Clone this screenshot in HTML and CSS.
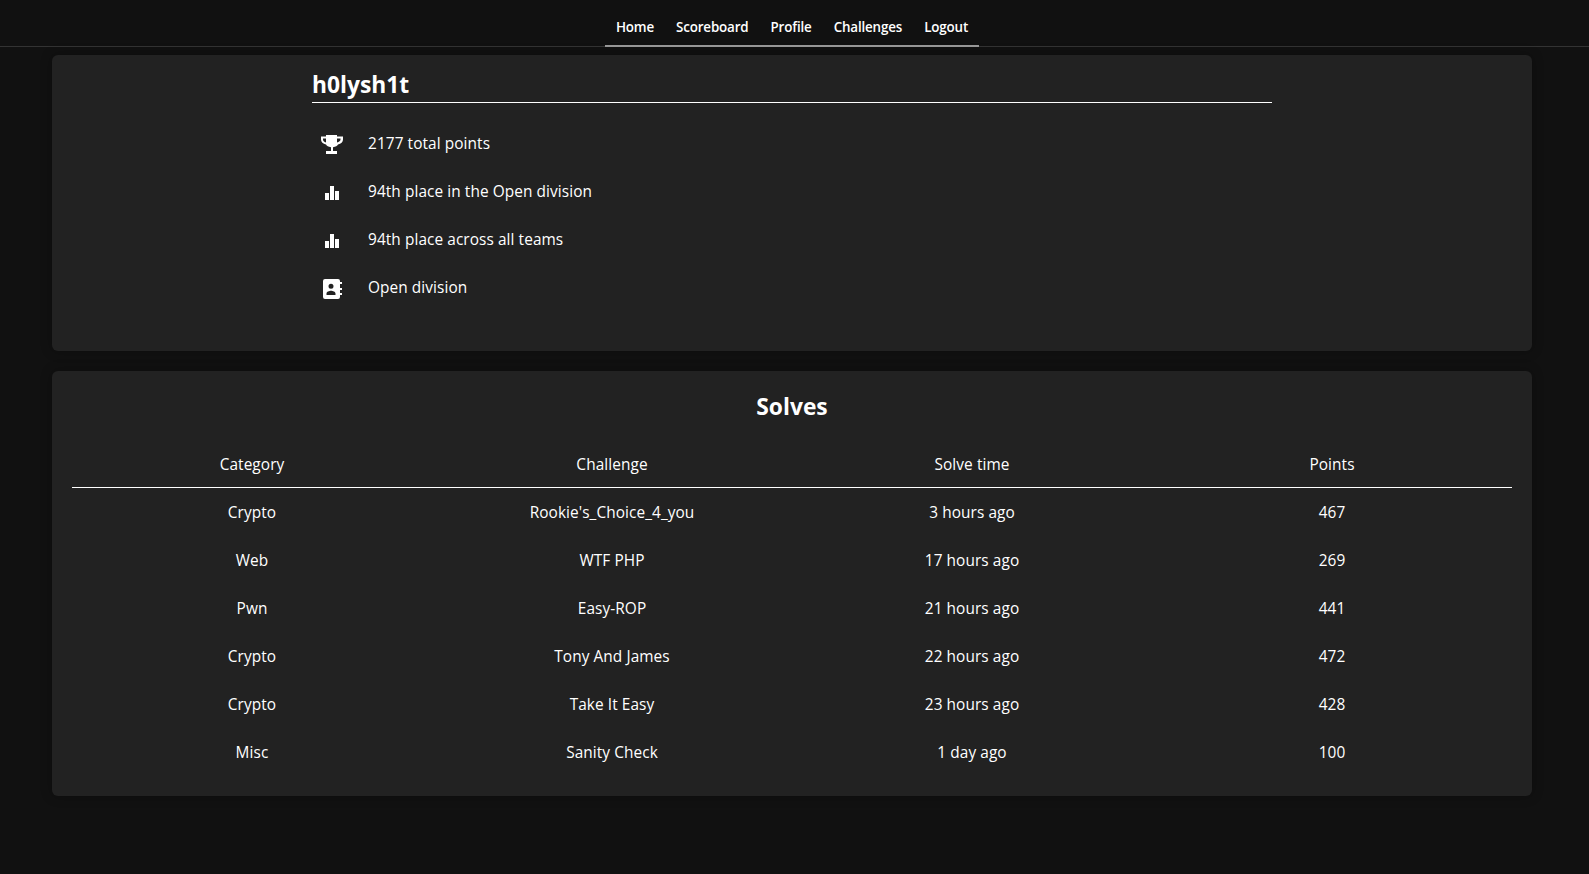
FILE: index.html
```html
<!DOCTYPE html>
<html lang="en">
<head>
<meta charset="utf-8">
<title>h0lysh1t</title>
<link rel="stylesheet" href="styles.css">
</head>
<body>
<header class="topbar">
  <nav class="tabs">
    <a class="tab" href="#">Home</a>
    <a class="tab" href="#">Scoreboard</a>
    <a class="tab" href="#">Profile</a>
    <a class="tab" href="#">Challenges</a>
    <a class="tab" href="#">Logout</a>
  </nav>
</header>
<main class="page">
  <section class="card profile">
    <div class="profile-inner">
      <h1 class="team">h0lysh1t</h1>
      <ul class="facts">
        <li class="fact">
          <svg class="icon" viewBox="0 0 24 24"><path fill="currentColor" fill-rule="evenodd" d="M6 4h11v1.500h6v3c0 2.600-2 4.500-5 5-.8 1.400-2.200 2.300-5 2.700V20h4v3H6v-3h5v-3.800c-2.800-.4-4.200-1.300-5-2.700-3-.5-5-2.400-5-5v-3h5zM3 7.500v1c0 1.400 1 2.500 3 3V7.500zM20.500 7.500H17v4c2-.5 3.500-1.600 3.500-3z"/></svg>
          <span>2177 total points</span>
        </li>
        <li class="fact">
          <svg class="icon" viewBox="0 0 24 24"><path fill="currentColor" d="M5 14h4v7H5zM10 7h4v14h-4zM15 12h4v9h-4z"/></svg>
          <span>94th place in the Open division</span>
        </li>
        <li class="fact">
          <svg class="icon" viewBox="0 0 24 24"><path fill="currentColor" d="M5 14h4v7H5zM10 7h4v14h-4zM15 12h4v9h-4z"/></svg>
          <span>94th place across all teams</span>
        </li>
        <li class="fact">
          <svg class="icon" viewBox="0 0 24 24"><path fill="currentColor" fill-rule="evenodd" d="M5 4a2 2 0 0 0-2 2v16a2 2 0 0 0 2 2h13a2 2 0 0 0 2-2v-2h2v-2h-2v-3h2v-2h-2V9h2V7h-2V6a2 2 0 0 0-2-2zM11 8.700a2.500 2.500 0 1 1 0 5 2.500 2.500 0 0 1 0-5zM6.500 20v-1.500c0-1.800 2.800-2.800 4.500-2.800s4.500 1 4.500 2.800V20z"/></svg>
          <span>Open division</span>
        </li>
      </ul>
    </div>
  </section>
  <section class="card solves">
    <h2 class="solves-title">Solves</h2>
    <table class="solves-table">
      <thead>
        <tr><th>Category</th><th>Challenge</th><th>Solve time</th><th>Points</th></tr>
      </thead>
      <tbody>
        <tr><td>Crypto</td><td>Rookie's_Choice_4_you</td><td>3 hours ago</td><td>467</td></tr>
        <tr><td>Web</td><td>WTF PHP</td><td>17 hours ago</td><td>269</td></tr>
        <tr><td>Pwn</td><td>Easy-ROP</td><td>21 hours ago</td><td>441</td></tr>
        <tr><td>Crypto</td><td>Tony And James</td><td>22 hours ago</td><td>472</td></tr>
        <tr><td>Crypto</td><td>Take It Easy</td><td>23 hours ago</td><td>428</td></tr>
        <tr><td>Misc</td><td>Sanity Check</td><td>1 day ago</td><td>100</td></tr>
      </tbody>
    </table>
  </section>
</main>
</body>
</html>
```
FILE: styles.css
```css
* { box-sizing: border-box; }
html, body { margin: 0; height: 100%; }
body {
  background: #111;
  color: #fff;
  font-family: "Open Sans", "Noto Sans", sans-serif;
  font-size: 16px;
  overflow: hidden;
}
.topbar {
  height: 47px;
  padding-right: 5px;
  border-bottom: 1px solid #333;
  display: flex;
  justify-content: center;
}
.tabs {
  height: 47px;
  display: flex;
  padding: 8px 11px 0;
  gap: 22px;
  align-items: center;
  border-bottom: 2px solid #999;
}
.tab {
  color: #fff;
  text-decoration: none;
  font-size: 13.4px;
  font-weight: 600;
  letter-spacing: -0.16px;
}
.page {
  padding: 8px 57px 0 52px;
  display: flex;
  flex-direction: column;
  gap: 20px;
}
.card {
  background: #222;
  border-radius: 6px;
  box-shadow: 0 0 12px rgba(0, 0, 0, .3);
}
.profile { height: 296px; padding: 12px 0 0 260px; }
.profile-inner { width: 960px; }
.team {
  margin: 0;
  font-size: 22.8px;
  font-weight: 700;
  line-height: 35px;
  border-bottom: 1px solid #fff;
}
.facts { list-style: none; margin: 16px 0 0; padding: 0; }
.fact { display: flex; align-items: center; height: 48px; font-size: 15.4px; letter-spacing: 0.08px; }
.icon { width: 24px; height: 24px; margin: 0 24px 0 8px; flex: none; }
.solves { height: 425px; padding: 18px 20px 0; }
.solves-title {
  margin: 0 0 18px;
  text-align: center;
  font-size: 22.8px;
  font-weight: 700;
  line-height: 35px;
}
.solves-table { width: 100%; border-collapse: collapse; table-layout: fixed; }
.solves-table th, .solves-table td {
  text-align: center;
  padding: 0;
  font-size: 15.4px;
  font-weight: 400;
  letter-spacing: 0.08px;
}
.solves-table th { height: 45px; }
.solves-table td { height: 48px; padding-top: 2px; }
.solves-table thead tr { border-bottom: 1px solid #fff; }
```
